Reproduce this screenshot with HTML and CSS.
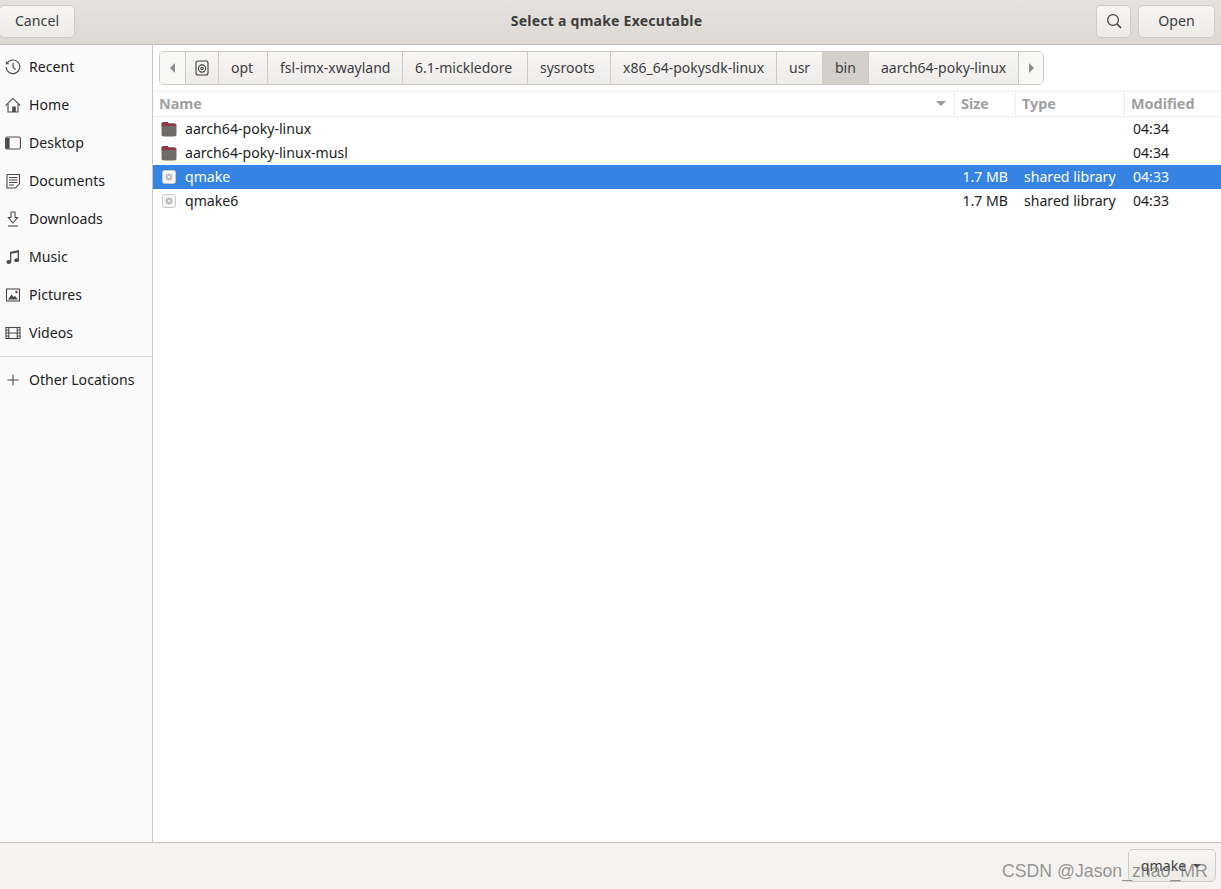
FILE: index.html
```html
<!DOCTYPE html>
<html lang="en">
<head>
  <meta charset="UTF-8">
  <title>Select a qmake Executable</title>
  <link rel="stylesheet" href="styles.css">
</head>
<body>
  <!-- Title bar -->
  <header class="titlebar">
    <button class="btn btn-cancel">Cancel</button>
    <div class="title">Select a qmake Executable</div>
    <button class="btn btn-search">
      <svg width="16" height="16" viewBox="0 0 16 16" fill="none" stroke="#3d3d3d" stroke-width="1.2"><circle cx="7" cy="7" r="5.4"/><path d="M11 11l4 4" stroke-width="1.6"/></svg>
    </button>
    <button class="btn btn-open">Open</button>
  </header>

  <div class="main">
    <!-- Places -->
    <nav class="sidebar">
      <div class="place">
        <svg class="place-icon" viewBox="0 0 16 16" fill="none" stroke="#4a4a4a" stroke-width="1.1"><path d="M2.2 4.2A6.8 6.8 0 1 1 1.2 8"/><path d="M1.4 2.4v2.4h2.4" /><path d="M8 4v4.2l2.6 2.4"/></svg>
        <span>Recent</span>
      </div>
      <div class="place">
        <svg class="place-icon" viewBox="0 0 16 16" fill="none" stroke="#4a4a4a" stroke-width="1.1"><path d="M.6 8.6L8 1.4l7.4 7.2"/><path d="M3 7v8h10V7"/><rect x="7.2" y="9.5" width="3.6" height="5.5" fill="#4a4a4a" stroke="none"/></svg>
        <span>Home</span>
      </div>
      <div class="place">
        <svg class="place-icon" viewBox="0 0 16 16" fill="none" stroke="#4a4a4a" stroke-width="1.1"><rect x=".6" y="2" width="14.8" height="12" rx="1.6"/><path d="M1 3h3.6v10.5H1z" fill="#4a4a4a" stroke="none"/></svg>
        <span>Desktop</span>
      </div>
      <div class="place">
        <svg class="place-icon" viewBox="0 0 16 16" fill="none" stroke="#4a4a4a" stroke-width="1.1"><path d="M2 1.5h12.5v9l-4 4.5H2z"/><path d="M4 4.5h8.5M4 7h8.5M4 9.5h8.5M4 12h5"/></svg>
        <span>Documents</span>
      </div>
      <div class="place">
        <svg class="place-icon" viewBox="0 0 16 16" fill="none" stroke="#4a4a4a" stroke-width="1.1"><path d="M6 1h4v5.5h2.6L8 12 3.4 6.5H6z"/><path d="M3 15h10"/></svg>
        <span>Downloads</span>
      </div>
      <div class="place">
        <svg class="place-icon" viewBox="0 0 16 16" fill="#4a4a4a"><path d="M5 3l9-2v10h-1.3V3.4L6.3 4.8V13H5z"/><ellipse cx="3.8" cy="13" rx="2.4" ry="1.9"/><ellipse cx="11.6" cy="11.2" rx="2.4" ry="1.9"/></svg>
        <span>Music</span>
      </div>
      <div class="place">
        <svg class="place-icon" viewBox="0 0 16 16" fill="none" stroke="#4a4a4a" stroke-width="1.1"><rect x="1.5" y="2" width="13" height="12"/><path d="M3 12.5l3.5-5 2.2 2.4 1.2-1.2 3 3.8z" fill="#4a4a4a" stroke="none"/><circle cx="11.5" cy="5" r="1.2" fill="#4a4a4a" stroke="none"/></svg>
        <span>Pictures</span>
      </div>
      <div class="place">
        <svg class="place-icon" viewBox="0 0 16 16" fill="none" stroke="#4a4a4a" stroke-width="1.1"><rect x="1" y="2.5" width="14" height="11"/><path d="M3.8 2.5v11M12.2 2.5v11M3.8 8h8.4M1 5h2.8M1 8h2.8M1 11h2.8M12.2 5H15M12.2 8H15M12.2 11H15"/></svg>
        <span>Videos</span>
      </div>
      <div class="sidebar-sep"></div>
      <div class="place">
        <svg class="place-icon" viewBox="0 0 16 16" fill="none" stroke="#4a4a4a" stroke-width="1.1"><path d="M8 2.5v11M2.5 8h11"/></svg>
        <span>Other Locations</span>
      </div>
    </nav>

    <section class="content">
      <!-- Path bar -->
      <div class="pathbar">
        <div class="seg seg-arrow"><span class="arrow-left"></span></div>
        <div class="seg seg-icon">
          <svg width="14" height="16" viewBox="0 0 14 16" fill="none" stroke="#3d3d3d" stroke-width="1.1"><rect x="1" y="1" width="12" height="14" rx="2"/><circle cx="7" cy="8.5" r="3.6"/><circle cx="7" cy="8.5" r="1.2"/></svg>
        </div>
        <div class="seg">opt</div>
        <div class="seg">fsl-imx-xwayland</div>
        <div class="seg">6.1-mickledore</div>
        <div class="seg">sysroots</div>
        <div class="seg">x86_64-pokysdk-linux</div>
        <div class="seg">usr</div>
        <div class="seg seg-active">bin</div>
        <div class="seg">aarch64-poky-linux</div>
        <div class="seg seg-arrow"><span class="arrow-right"></span></div>
      </div>

      <!-- File list -->
      <div class="list-head file-grid">
        <div class="col col-name">Name<span class="sort-arrow"></span></div>
        <div class="col">Size</div>
        <div class="col">Type</div>
        <div class="col">Modified</div>
      </div>
      <div class="file-grid row">
        <div class="cell-name"><svg class="folder" viewBox="0 0 16 16"><path d="M.5 3.5Q.5 1 3 1h3.5L8 2.5h5.5q2 0 2 2.5v8q0 2.5-2.5 2.5H3q-2.5 0-2.5-2.5z" fill="#6f6b68"/><path d="M.5 5V3.5Q.5 1 3 1h3.5L8 2.5h5.5q2 0 2 2.5z" fill="#8c3a45"/></svg>aarch64-poky-linux</div>
        <div class="cell-size"></div><div class="cell-type"></div><div class="cell-mod">04:34</div>
      </div>
      <div class="file-grid row">
        <div class="cell-name"><svg class="folder" viewBox="0 0 16 16"><path d="M.5 3.5Q.5 1 3 1h3.5L8 2.5h5.5q2 0 2 2.5v8q0 2.5-2.5 2.5H3q-2.5 0-2.5-2.5z" fill="#6f6b68"/><path d="M.5 5V3.5Q.5 1 3 1h3.5L8 2.5h5.5q2 0 2 2.5z" fill="#8c3a45"/></svg>aarch64-poky-linux-musl</div>
        <div class="cell-size"></div><div class="cell-type"></div><div class="cell-mod">04:34</div>
      </div>
      <div class="file-grid row row-selected">
        <div class="cell-name"><svg class="file-icon" viewBox="0 0 14 14"><rect x=".5" y=".5" width="13" height="13" rx="2" fill="#f6f6f6" stroke="#c9c9c9"/><circle cx="7" cy="7" r="3.4" fill="#bdbdbd"/><circle cx="7" cy="7" r="1.3" fill="#ececec"/></svg>qmake</div>
        <div class="cell-size">1.7 MB</div><div class="cell-type">shared library</div><div class="cell-mod">04:33</div>
      </div>
      <div class="file-grid row">
        <div class="cell-name"><svg class="file-icon" viewBox="0 0 14 14"><rect x=".5" y=".5" width="13" height="13" rx="2" fill="#f6f6f6" stroke="#c9c9c9"/><circle cx="7" cy="7" r="3.4" fill="#bdbdbd"/><circle cx="7" cy="7" r="1.3" fill="#ececec"/></svg>qmake6</div>
        <div class="cell-size">1.7 MB</div><div class="cell-type">shared library</div><div class="cell-mod">04:33</div>
      </div>
    </section>
  </div>

  <!-- Filter combo -->
  <footer class="footer">
    <button class="btn btn-filter">qmake<span class="combo-arrow"></span></button>
  </footer>
  <div class="watermark">CSDN @Jason_zhao_MR</div>
</body>
</html>
```

FILE: styles.css
```css
/* General layout */
html, body {
  height: 100%;
}

body {
  margin: 0;
  display: flex;
  flex-direction: column;
  font-family: "Noto Sans", sans-serif;
  font-size: 14.1px;
  color: #222;
  background-color: #fff;
  overflow: hidden;
  position: relative;
}

/* Title bar */
.titlebar {
  height: 44px;
  flex: none;
  display: flex;
  align-items: center;
  padding: 0 6px 0 0;
  background: linear-gradient(#e6e3df, #dcd9d4);
  border-bottom: 1px solid #c4bfb8;
}

.title {
  flex: 1;
  text-align: center;
  font-weight: 700;
  font-size: 14px;
  letter-spacing: 0.25px;
  color: #3d3d3d;
  padding: 0 0 3px 42px;
}

.btn {
  height: 33px;
  padding: 0 0 2px;
  font-family: inherit;
  font-size: 14.2px;
  color: #3d3d3d;
  border: 1px solid #cfcbc5;
  border-radius: 5px;
  background: linear-gradient(#f7f6f5, #ecebe8);
  display: flex;
  align-items: center;
  justify-content: center;
}

.titlebar .btn { margin-top: -1px; }
.btn-cancel { width: 76px; margin-left: -1px; }
.btn-search { width: 35px; margin-right: 7px; }
.btn-open { width: 77px; }

/* Main area */
.main {
  flex: 1;
  display: flex;
  min-height: 0;
}

.sidebar {
  width: 152px;
  flex: none;
  padding-top: 3px;
  background-color: #fafafa;
  border-right: 1px solid #c9c5bf;
}

.place {
  height: 38px;
  display: flex;
  align-items: center;
  gap: 8px;
  padding-left: 5px;
}

.place span {
  padding-bottom: 2px;
}

.place-icon {
  width: 16px;
  height: 16px;
  flex: none;
}

.sidebar-sep {
  height: 1px;
  margin-top: 4px;
  margin-bottom: 4px;
  background-color: #dedcd9;
}

.content {
  flex: 1;
  min-width: 0;
}

/* Path bar */
.pathbar {
  display: grid;
  grid-template-columns: 26px 33px 49px 135px 125px 83px 166px 46px 46px 150px 24px;
  width: max-content;
  height: 34px;
  margin: 6px 0 6px 6px;
  box-sizing: border-box;
  border: 1px solid #cdc9c3;
  border-radius: 5px;
  overflow: hidden;
  font-size: 14px;
}

.seg {
  display: flex;
  align-items: center;
  padding: 0 0 2px 12px;
  color: #3d3d3d;
  background: linear-gradient(#f7f6f5, #edecea);
  border-right: 1px solid #cdc9c3;
}

.seg:last-child {
  border-right: none;
}

.seg-arrow, .seg-icon {
  justify-content: center;
  padding: 0;
}

.seg-arrow {
  background: #f8f8f7;
}

.seg-active {
  background: #d3cfca;
}

.arrow-left, .arrow-right {
  width: 0;
  height: 0;
  border-top: 5px solid transparent;
  border-bottom: 5px solid transparent;
}

.arrow-left { border-right: 5px solid #8a8a8a; }
.arrow-right { border-left: 5px solid #8a8a8a; }

/* File list */
.file-grid {
  display: grid;
  grid-template-columns: 802px 61px 109px 1fr;
}

.list-head {
  height: 24px;
  border-top: 1px solid #f0efed;
  border-bottom: 1px solid #ececea;
  font-weight: 700;
  font-size: 14.4px;
  color: #a0a0a0;
}

.col {
  display: flex;
  align-items: center;
  padding: 0 0 2px 6px;
  border-right: 1px solid #ececea;
}

.col:last-child {
  border-right: none;
}

.col-name {
  justify-content: space-between;
  padding-right: 8px;
}

.sort-arrow {
  width: 0;
  height: 0;
  border-left: 5px solid transparent;
  border-right: 5px solid transparent;
  border-top: 5px solid #9b9b9b;
}

.row {
  height: 24px;
  align-items: center;
}

.row-selected {
  background-color: #3584e4;
  color: #fff;
}

.row > div {
  padding-bottom: 2px;
}

.cell-name {
  display: flex;
  align-items: center;
  padding-left: 8px;
}

.folder {
  width: 16px;
  height: 16px;
  margin: 2px 8px 0 0;
}

.file-icon {
  width: 14px;
  height: 14px;
  margin: 2px 9px 0 1px;
}

.cell-size {
  text-align: right;
  padding-right: 8px;
}

.cell-type {
  padding-left: 8px;
}

.cell-mod {
  padding-left: 8px;
}

/* Bottom bar */
.footer {
  height: 46px;
  flex: none;
  display: flex;
  align-items: center;
  justify-content: flex-end;
  padding-right: 5px;
  background-color: #f4f3f1;
  border-top: 1px solid #c9c5bf;
}

.btn-filter {
  width: 88px;
  margin-top: -1px;
  padding: 0 2px 0 0;
  gap: 7px;
}

.combo-arrow {
  width: 0;
  height: 0;
  border-left: 4px solid transparent;
  border-right: 4px solid transparent;
  border-top: 4px solid #3d3d3d;
}

.watermark {
  position: absolute;
  left: 1002px;
  top: 861px;
  font-family: "Liberation Sans", sans-serif;
  font-size: 17.7px;
  color: rgba(110, 110, 110, 0.72);
  white-space: nowrap;
}
```
